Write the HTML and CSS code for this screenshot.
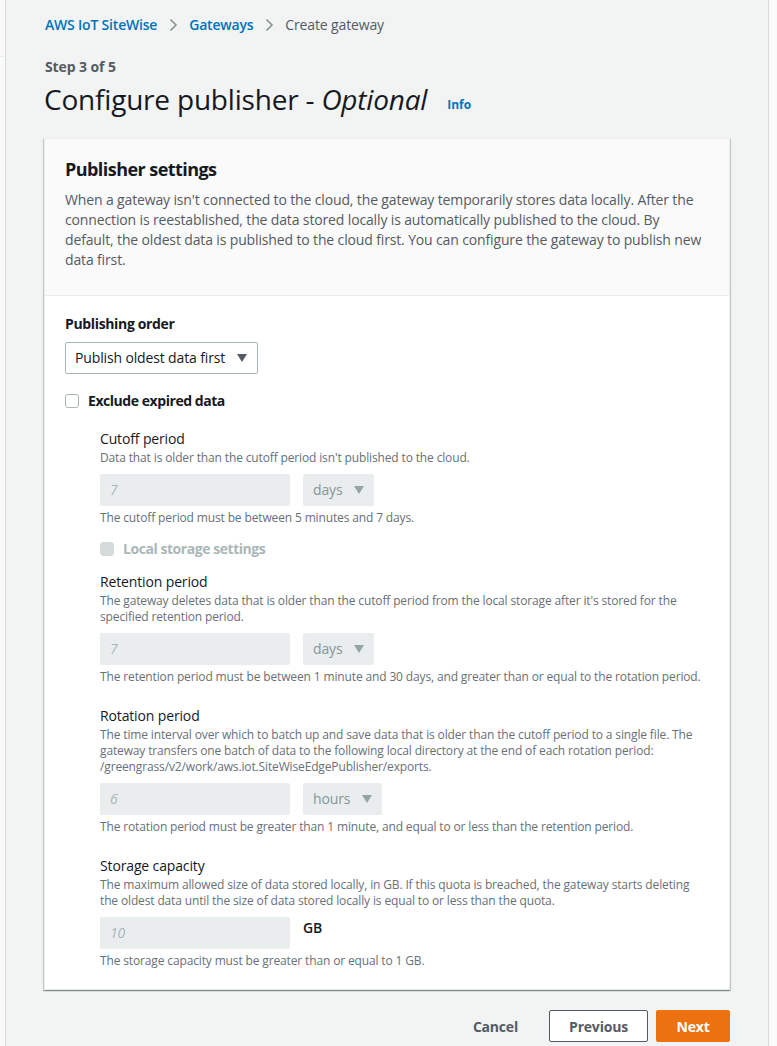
FILE: index.html
```html
<!DOCTYPE html>
<html lang="en">
<head>
<meta charset="utf-8">
<title>Configure publisher</title>
<link rel="stylesheet" href="styles.css">
</head>
<body>
<div class="shell">
  <div class="rail"><div class="rail-line"></div></div>
  <main class="main">
    <nav class="crumbs">
      <a class="crumb-link">AWS IoT SiteWise</a>
      <svg class="chev" width="16" height="16" viewBox="0 0 16 16"><path d="M5.5 2.5 L11 8 L5.5 13.5" fill="none" stroke="#879596" stroke-width="1.6"/></svg>
      <a class="crumb-link">Gateways</a>
      <svg class="chev" width="16" height="16" viewBox="0 0 16 16"><path d="M5.5 2.5 L11 8 L5.5 13.5" fill="none" stroke="#879596" stroke-width="1.6"/></svg>
      <span class="crumb-current">Create gateway</span>
    </nav>
    <div class="step">Step 3 of 5</div>
    <div class="title-row">
      <h1 class="title">Configure publisher - <em>Optional</em></h1>
      <a class="info">Info</a>
    </div>

    <section class="panel">
      <header class="panel-head">
        <h2 class="panel-title">Publisher settings</h2>
        <p class="panel-desc">When a gateway isn't connected to the cloud, the gateway temporarily stores data locally. After the connection is reestablished, the data stored locally is automatically published to the cloud. By default, the oldest data is published to the cloud first. You can configure the gateway to publish new data first.</p>
      </header>
      <div class="panel-body">
        <div class="field-label">Publishing order</div>
        <div class="select">Publish oldest data first <span class="caret"></span></div>

        <label class="check">
          <span class="box"></span>
          <span class="check-label">Exclude expired data</span>
        </label>

        <div class="sub">
          <div class="sub-field">
            <div class="sub-label">Cutoff period</div>
            <div class="sub-desc">Data that is older than the cutoff period isn't published to the cloud.</div>
            <div class="inputs">
              <div class="input">7</div>
              <div class="unit-select">days <span class="caret dim"></span></div>
            </div>
            <div class="constraint">The cutoff period must be between 5 minutes and 7 days.</div>
          </div>

          <label class="check disabled">
            <span class="box"></span>
            <span class="check-label">Local storage settings</span>
          </label>

          <div class="sub-field">
            <div class="sub-label">Retention period</div>
            <div class="sub-desc">The gateway deletes data that is older than the cutoff period from the local storage after it's stored for the specified retention period.</div>
            <div class="inputs">
              <div class="input">7</div>
              <div class="unit-select">days <span class="caret dim"></span></div>
            </div>
            <div class="constraint">The retention period must be between 1 minute and 30 days, and greater than or equal to the rotation period.</div>
          </div>

          <div class="sub-field">
            <div class="sub-label">Rotation period</div>
            <div class="sub-desc">The time interval over which to batch up and save data that is older than the cutoff period to a single file. The gateway transfers one batch of data to the following local directory at the end of each rotation period: /greengrass/v2/work/aws.iot.SiteWiseEdgePublisher/exports.</div>
            <div class="inputs">
              <div class="input">6</div>
              <div class="unit-select">hours <span class="caret dim"></span></div>
            </div>
            <div class="constraint">The rotation period must be greater than 1 minute, and equal to or less than the retention period.</div>
          </div>

          <div class="sub-field last">
            <div class="sub-label">Storage capacity</div>
            <div class="sub-desc">The maximum allowed size of data stored locally, in GB. If this quota is breached, the gateway starts deleting the oldest data until the size of data stored locally is equal to or less than the quota.</div>
            <div class="inputs">
              <div class="input italic">10</div>
              <div class="unit-text">GB</div>
            </div>
            <div class="constraint">The storage capacity must be greater than or equal to 1 GB.</div>
          </div>
        </div>
      </div>
    </section>

    <div class="actions">
      <button class="btn link">Cancel</button>
      <button class="btn normal">Previous</button>
      <button class="btn primary">Next</button>
    </div>
  </main>
  <div class="right-rail"></div>
</div>
</body>
</html>
```

FILE: styles.css
```css
* { box-sizing: border-box; }
html, body { margin: 0; padding: 0; }
body {
  font-family: "Open Sans", "Noto Sans", "Liberation Sans", sans-serif;
  color: #16191f;
  background: #ffffff;
  font-size: 14px;
  line-height: 20px;
  letter-spacing: -0.01em;
}
.shell {
  display: flex;
  min-height: 1046px;
  width: 777px;
}
.rail {
  width: 6px;
  flex: none;
  background: #fafafa;
  border-right: 1px solid #d5dbdb;
  padding-top: 56px;
}
.rail-line { height: 1px; background: #eaeded; }
.main {
  flex: none;
  width: 762px;
  background: #f2f3f3;
  padding: 14px 38px 0 38px;
}
.right-rail {
  flex: 1;
  background: #fafafa;
  border-left: 1px solid #d5dbdb;
}
.crumbs {
  display: flex;
  align-items: center;
  gap: 8px;
  height: 22px;
  margin-left: 1px;
}
.crumb-link { color: #0073bb; font-weight: 600; letter-spacing: -0.2px; }
.crumb-current { color: #545b64; }
.chev { display: block; }
.step {
  margin-top: 20px;
  color: #545b64;
  font-weight: 700;
  font-size: 14px;
  line-height: 22px;
  margin-left: 1px;
  letter-spacing: -0.1px;
}
.title-row {
  display: flex;
  align-items: center;
  gap: 20px;
  margin-top: 3px;
  height: 36px;
}
.title {
  margin: 0;
  font-size: 28px;
  font-weight: 400;
  line-height: 36px;
  letter-spacing: -0.2px;
}
.title em { font-style: italic; }
.info {
  color: #0073bb;
  font-size: 12px;
  font-weight: 700;
  margin-top: 12px;
  letter-spacing: 0;
}
.panel {
  margin-top: 21px;
  width: 686px;
  background: #fff;
  border: 1px solid #eaeded;
  box-shadow: 0 1px 1px 0 rgba(0,28,36,0.3), 1px 1px 1px 0 rgba(0,28,36,0.15), -1px 1px 1px 0 rgba(0,28,36,0.15);
}
.panel-head {
  background: #fafafa;
  border-bottom: 1px solid #eaeded;
  padding: 17px 20px 25px 20px;
}
.panel-title {
  margin: 0;
  font-size: 18px;
  font-weight: 700;
  line-height: 26px;
  letter-spacing: -0.55px;
}
.panel-desc {
  margin: 8px 0 0 0;
  color: #545b64;
  font-size: 14px;
  line-height: 20px;
}
.panel-body {
  padding: 18px 20px 20px 20px;
}
.field-label {
  font-weight: 700;
  line-height: 20px;
  letter-spacing: -0.35px;
}
.select {
  margin-top: 8px;
  display: inline-flex;
  align-items: center;
  gap: 10px;
  height: 32px;
  padding: 0 10px 0 9px;
  border: 1px solid #aab7b8;
  border-radius: 2px;
  background: #fff;
  color: #16191f;
}
.caret {
  display: inline-block;
  width: 0; height: 0;
  border-left: 5.5px solid transparent;
  border-right: 5.5px solid transparent;
  border-top: 8px solid #545b64;
  margin-left: 2px;
}
.caret.dim { border-top-color: #95a5a6; }
.check {
  display: flex;
  align-items: center;
  gap: 9px;
  margin-top: 17px;
  height: 20px;
}
.box {
  width: 14px; height: 14px;
  border: 1px solid #aab7b8;
  border-radius: 3px;
  background: #fff;
  flex: none;
}
.check-label { font-weight: 700; letter-spacing: -0.45px; }
.check.disabled .box { background: #d5dbdb; border-color: #d5dbdb; }
.check.disabled .check-label { color: #aab7b8; }
.sub {
  padding-left: 35px;
  margin-top: 18px;
}
.sub-label { line-height: 20px; }
.sub-desc {
  color: #687078;
  font-size: 12px;
  line-height: 16px;
  margin-top: 1px;
}
.inputs {
  display: flex;
  align-items: flex-start;
  gap: 13px;
  margin-top: 8px;
}
.input {
  width: 190px;
  height: 32px;
  background: #eaeded;
  border-radius: 2px;
  color: #aab7b8;
  padding: 0 10px;
  line-height: 32px;
  font-style: italic;
}
.unit-select {
  height: 32px;
  background: #eaeded;
  border-radius: 2px;
  color: #879596;
  padding: 0 10px;
  display: flex;
  align-items: center;
  gap: 10px;
}
.unit-text {
  font-weight: 600;
  color: #16191f;
  line-height: 20px;
  padding-top: 1px;
}
.constraint {
  color: #687078;
  font-size: 12px;
  line-height: 16px;
  margin-top: 4px;
}
.sub-field { margin-bottom: 21px; }
.sub-field:first-child { margin-bottom: 13px; }
.sub-field.last { margin-bottom: 0; }
.sub .check { margin-top: 0; margin-bottom: 13px; }
.actions {
  display: flex;
  justify-content: flex-end;
  align-items: center;
  gap: 8px;
  width: 686px;
  margin-top: 20px;
}
.btn {
  font-family: inherit;
  font-size: 14px;
  font-weight: 700;
  height: 32px;
  border-radius: 2px;
  padding: 0 10px;
  cursor: pointer;
  letter-spacing: -0.2px;
}
.btn.link {
  background: transparent;
  border: 1px solid transparent;
  color: #545b64;
  margin-right: 12px;
}
.btn.normal {
  background: #fff;
  border: 1px solid #545b64;
  color: #545b64;
  width: 99px;
}
.btn.primary {
  background: #ec7211;
  border: 1px solid #ec7211;
  color: #fff;
  width: 74px;
}
```
